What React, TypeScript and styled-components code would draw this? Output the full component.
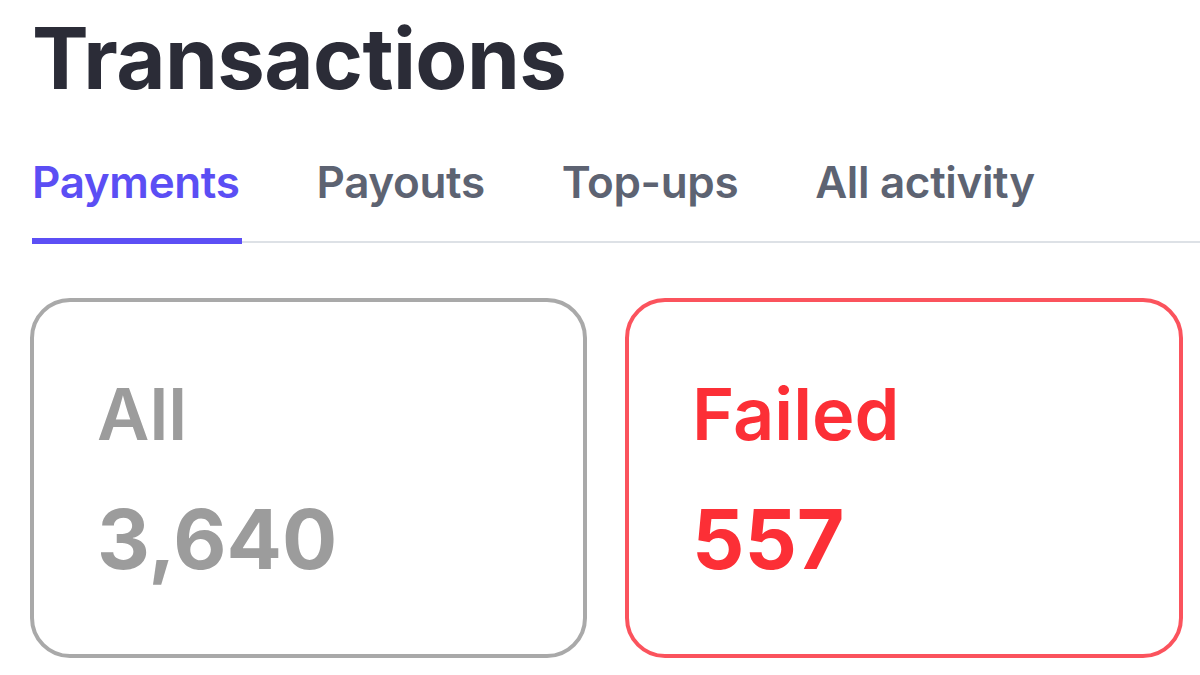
import styled, { createGlobalStyle } from "styled-components";

const GlobalStyle = createGlobalStyle`
  html, body {
    margin: 0;
    padding: 0;
    background: #ffffff;
  }
  body {
    font-family: Inter, "Noto Sans", "Liberation Sans", sans-serif;
    -webkit-font-smoothing: antialiased;
  }
`;

const Page = styled.div`
  width: 1200px;
  height: 675px;
  overflow: hidden;
  padding: 0 0 0 32px;
  box-sizing: border-box;
`;

const Title = styled.h1`
  margin: 0;
  padding-top: 8px;
  font-size: 85px;
  line-height: 1.2;
  font-weight: 700;
  letter-spacing: -0.6px;
  color: #2b2c37;
`;

const TabBar = styled.div`
  display: flex;
  align-items: flex-end;
  gap: 77px;
  margin-top: 46px;
  border-bottom: 2px solid #dde1e6;
`;

const Tab = styled.button<{ $active?: boolean }>`
  position: relative;
  border: none;
  background: none;
  padding: 0 0 32px;
  margin: 0;
  font-family: inherit;
  font-size: 44px;
  line-height: 1.2;
  font-weight: 600;
  letter-spacing: -0.35px;
  color: ${(p) => (p.$active ? "#5b4ef4" : "#5d6372")};
  cursor: pointer;

  &::after {
    content: "";
    display: ${(p) => (p.$active ? "block" : "none")};
    position: absolute;
    left: 0;
    right: -2px;
    bottom: -3px;
    height: 6px;
    background: #5c4ff5;
  }
`;

const Cards = styled.div`
  display: grid;
  grid-template-columns: 557px 558px;
  gap: 38px;
  margin-top: 55px;
  margin-left: -2px;
`;

const Card = styled.div<{ $tone: "neutral" | "danger" }>`
  height: 360px;
  box-sizing: border-box;
  border: 4px solid ${(p) => (p.$tone === "danger" ? "#fb535d" : "#a9a9a9")};
  border-radius: 40px;
  padding: 69px 0 0 63px;
  color: ${(p) => (p.$tone === "danger" ? "#fc2f36" : "#9c9c9c")};
`;

const CardLabel = styled.div`
  font-size: 72px;
  line-height: 1.2;
  font-weight: 600;
`;

const CardValue = styled.div`
  margin-top: 34px;
  font-size: 82px;
  line-height: 1.2;
  font-weight: 700;
`;

const tabs = ["Payments", "Payouts", "Top-ups", "All activity"];

const stats = [
  { label: "All", value: "3,640", tone: "neutral" as const },
  { label: "Failed", value: "557", tone: "danger" as const },
];

export default function App() {
  return (
    <>
      <GlobalStyle />
      <Page>
        <Title>Transactions</Title>
        <TabBar>
          {tabs.map((t, i) => (
            <Tab key={t} $active={i === 0} type="button">
              {t}
            </Tab>
          ))}
        </TabBar>
        <Cards>
          {stats.map((s) => (
            <Card key={s.label} $tone={s.tone}>
              <CardLabel>{s.label}</CardLabel>
              <CardValue>{s.value}</CardValue>
            </Card>
          ))}
        </Cards>
      </Page>
    </>
  );
}
